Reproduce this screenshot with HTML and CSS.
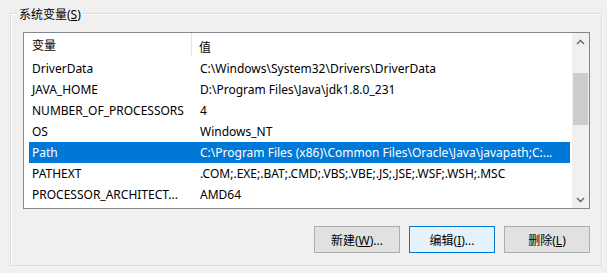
FILE: index.html
```html
<!DOCTYPE html>
<html lang="zh-CN">
<head>
  <meta charset="UTF-8" />
  <title>系统变量</title>
  <link rel="stylesheet" href="styles.css">
</head>
<body>

  <!-- System variables group -->
  <div class="group">
    <span class="group-title">系统变量(<u>S</u>)</span>

    <div class="listview">
      <div class="list-main">
        <div class="list-header">
          <div class="hcell name">变量</div>
          <div class="hcell">值</div>
        </div>
        <div class="row"><div class="cell name">DriverData</div><div class="cell">C:\Windows\System32\Drivers\DriverData</div></div>
        <div class="row"><div class="cell name">JAVA_HOME</div><div class="cell">D:\Program Files\Java\jdk1.8.0_231</div></div>
        <div class="row"><div class="cell name">NUMBER_OF_PROCESSORS</div><div class="cell">4</div></div>
        <div class="row"><div class="cell name">OS</div><div class="cell">Windows_NT</div></div>
        <div class="row selected"><div class="cell name">Path</div><div class="cell">C:\Program Files (x86)\Common Files\Oracle\Java\javapath;C:...</div></div>
        <div class="row"><div class="cell name">PATHEXT</div><div class="cell">.COM;.EXE;.BAT;.CMD;.VBS;.VBE;.JS;.JSE;.WSF;.WSH;.MSC</div></div>
        <div class="row"><div class="cell name">PROCESSOR_ARCHITECT...</div><div class="cell">AMD64</div></div>
      </div>

      <div class="scrollbar">
        <div class="arrow">
          <svg width="9" height="6" viewBox="0 0 9 6"><path d="M1 5 L4.5 1.5 L8 5" fill="none" stroke="#606060" stroke-width="1.4"/></svg>
        </div>
        <div class="track">
          <div class="thumb"></div>
        </div>
        <div class="arrow">
          <svg width="9" height="6" viewBox="0 0 9 6"><path d="M1 1 L4.5 4.5 L8 1" fill="none" stroke="#606060" stroke-width="1.4"/></svg>
        </div>
      </div>
    </div>

    <div class="buttons">
      <button class="btn">新建(<u>W</u>)...</button>
      <button class="btn focused">编辑(<u>I</u>)...</button>
      <button class="btn">删除(<u>L</u>)</button>
    </div>
  </div>

</body>
</html>
```

FILE: styles.css
```css
body {
  margin: 0;
  background: #f0f0f0;
  color: #000;
  font-family: "Noto Sans", "Noto Sans CJK SC", sans-serif;
  font-size: 12px;
}

/* Group box */
.group {
  position: relative;
  margin: 13px 5px 0 10px;
  height: 253px;
  padding: 18px 11px 0 12px;
  box-sizing: border-box;
  border: 1px solid #dcdcdc;
  box-shadow: inset 1px 1px 0 #fff, 1px 1px 0 #fff;
}

.group-title {
  position: absolute;
  left: 6px;
  top: -7px;
  padding: 0 2px;
  line-height: 16px;
  background: #f0f0f0;
}

/* List view */
.listview {
  display: flex;
  height: 177px;
  box-sizing: border-box;
  border: 1px solid #828790;
  background: #fff;
  overflow: hidden;
}

.list-main {
  flex: 1;
  min-width: 0;
  padding-right: 2px;
}

.list-header {
  display: grid;
  grid-template-columns: 163px 1fr;
  height: 25px;
  margin-left: 5px;
}

.hcell {
  padding-left: 3px;
  padding-top: 4px;
  line-height: 21px;
}

.hcell.name {
  border-right: 1px solid #e5e5e5;
  margin-bottom: 3px;
  line-height: 18px;
}

.list-header .hcell:last-child {
  padding-left: 7px;
}

.row {
  display: grid;
  grid-template-columns: 168px 1fr;
  height: 21px;
  line-height: 21px;
  margin-left: 5px;
}

.cell {
  padding-left: 3px;
  white-space: nowrap;
  overflow: hidden;
}

.cell.name {
  padding-right: 8px;
}

.row.selected {
  background: #0078d7;
  color: #fff;
}

/* Scroll bar */
.scrollbar {
  width: 17px;
  flex-shrink: 0;
  display: flex;
  flex-direction: column;
  background: #f0f0f0;
}

.arrow {
  height: 17px;
  display: flex;
  align-items: center;
  justify-content: center;
}

.track {
  flex: 1;
  padding: 23px 1px 0 1px;
}

.thumb {
  height: 52px;
  background: #cdcdcd;
}

/* Buttons */
.buttons {
  display: flex;
  justify-content: flex-end;
  gap: 9px;
  margin-top: 17px;
}

.btn {
  width: 86px;
  height: 27px;
  padding: 0;
  font-family: inherit;
  font-size: 12px;
  color: #000;
  background: #e1e1e1;
  border: 1px solid #adadad;
  border-radius: 0;
}

.btn.focused {
  background: #e5f1fb;
  border-color: #0078d7;
}
```
